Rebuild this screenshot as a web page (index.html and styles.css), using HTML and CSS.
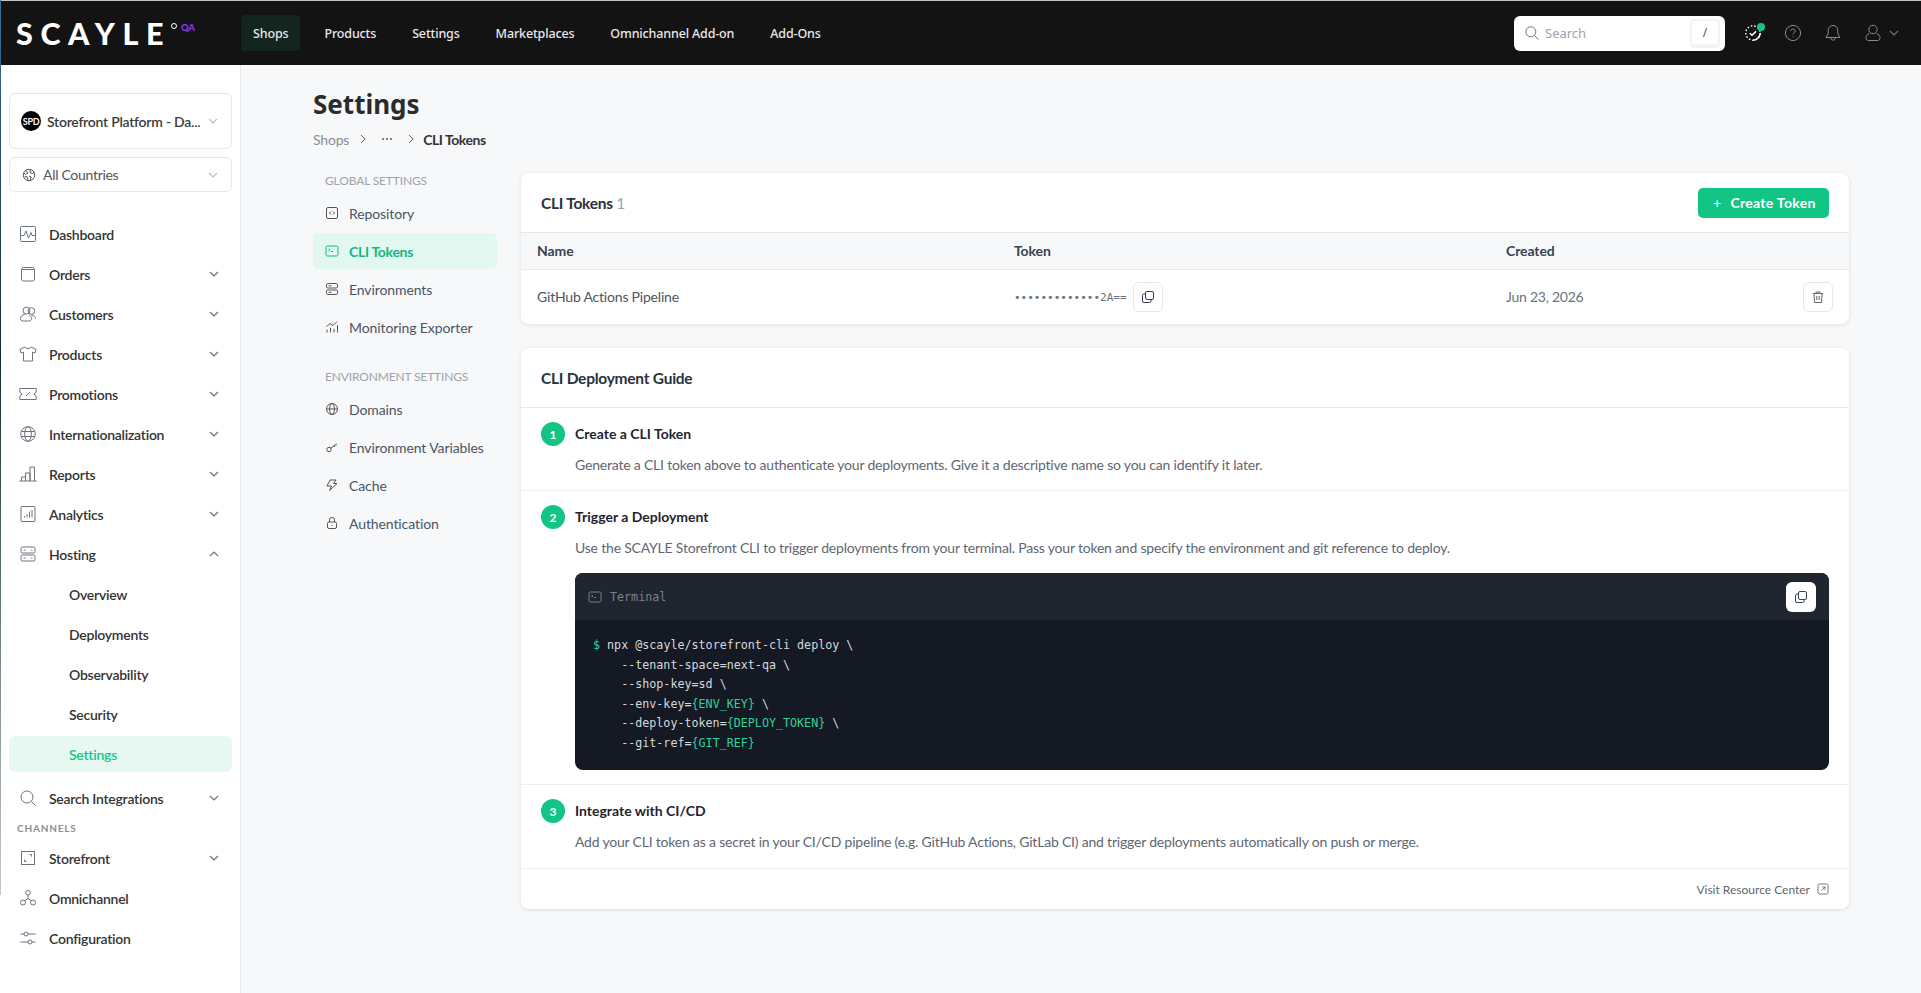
FILE: index.html
```html
<!DOCTYPE html>
<html lang="en">
<head>
    <meta charset="UTF-8">
    <title>CLI Tokens - SCAYLE</title>
    <link rel="stylesheet" href="styles.css">
</head>
<body>
    <div class="edge"></div>

    <header class="topbar">
        <div class="logo">
            <span class="logo-word">SCAYLE</span>
            <span class="logo-ring"></span>
            <span class="logo-env">QA</span>
        </div>
        <nav class="topnav">
            <a class="topnav-item active">Shops</a>
            <a class="topnav-item">Products</a>
            <a class="topnav-item">Settings</a>
            <a class="topnav-item">Marketplaces</a>
            <a class="topnav-item">Omnichannel Add-on</a>
            <a class="topnav-item">Add-Ons</a>
        </nav>
        <div class="topbar-right">
            <div class="search">
                <svg class="ico-16" viewBox="0 0 16 16"><circle cx="6.8" cy="6.8" r="5"/><path d="M10.5 10.5L14.5 14.5"/></svg>
                <span class="search-text">Search</span>
                <span class="kbd">/</span>
            </div>
            <div class="top-icon status">
                <svg class="ico-18" viewBox="0 0 18 18"><circle class="dashed" cx="9" cy="9" r="7.2"/><path class="solid" d="M9 16.2A7.2 7.2 0 0 0 16.2 9"/><path class="solid" d="M5.8 9.2L8 11.2 12 7.4"/></svg>
                <span class="status-dot"></span>
            </div>
            <div class="top-icon">
                <svg class="ico-18" viewBox="0 0 18 18"><circle cx="9" cy="9" r="7.6"/><path d="M6.8 7.1C6.8 5.8 7.8 5 9 5s2.2.8 2.2 2c0 1.700-2.200 1.700-2.200 3.500"/><path d="M9 12.400v.9"/></svg>
            </div>
            <div class="top-icon">
                <svg class="ico-18" viewBox="0 0 18 18"><path d="M9 1.500c-3 0-4.800 2.200-4.800 5v3.200L2 13.500h14l-2.200-3.800V6.500c0-2.800-1.800-5-4.800-5z"/><path d="M6.800 14a2.200 2.200 0 0 0 4.400 0"/></svg>
            </div>
            <div class="top-icon user">
                <svg class="ico-18" viewBox="0 0 18 18"><circle cx="9" cy="5.500" r="4.200"/><path d="M5.500 9.500C3 10.500 2 11.800 2 13.800 2 15.500 3 16.500 4.500 16.500h9c1.500 0 2.500-1 2.500-2.700 0-2-1-3.300-3.500-4.300"/></svg>
                <svg class="chev" viewBox="0 0 10 6"><path d="M1 1l4 4 4-4"/></svg>
            </div>
        </div>
    </header>

    <div class="layout">
        <aside class="sidebar">
            <div class="select shop-select">
                <span class="shop-badge">SPD</span>
                <span class="select-label">Storefront Platform - Da...</span>
                <svg class="chev light" viewBox="0 0 10 6"><path d="M1 1l4 4 4-4"/></svg>
            </div>
            <div class="select country-select">
                <svg class="ico-14" viewBox="0 0 14 14"><circle cx="7" cy="7" r="5.700"/><path d="M4 2.500l2 2.500-2.500 1.500L2 5M8.500 1.800L8 4.500l2.500 1 2-1.500M7 8l2 1-.5 3M2.500 9L5 8.500 6 12"/></svg>
                <span class="select-label regular">All Countries</span>
                <svg class="chev light" viewBox="0 0 10 6"><path d="M1 1l4 4 4-4"/></svg>
            </div>

            <ul class="menu">
                <li class="menu-row">
                    <svg class="ico-18" viewBox="0 0 18 18"><rect x="1.500" y="1.500" width="15" height="15" rx=".8"/><path d="M1.500 10.500H5L7 6l2.500 7L12 7.500l1 3h3.500"/></svg>
                    <span>Dashboard</span>
                </li>
                <li class="menu-row">
                    <svg class="ico-18" viewBox="0 0 18 18"><rect x="2.500" y="2.500" width="13" height="13.500" rx="2"/><path d="M3 4.500h12"/></svg>
                    <span>Orders</span>
                    <svg class="chev" viewBox="0 0 10 6"><path d="M1 1l4 4 4-4"/></svg>
                </li>
                <li class="menu-row">
                    <svg class="ico-18" viewBox="0 0 18 18"><circle cx="7.500" cy="5.500" r="3.500"/><circle cx="12.500" cy="6" r="3.300"/><path d="M6 9c-3 .8-4.500 2.500-4.500 4.500 0 1.500 1 2.500 2.500 2.500h6c1.500 0 2.500-1 2.500-2.500 0-1.500-.8-2.800-2.500-3.800M12.500 10c2.500.5 4 1.800 4 3.500"/></svg>
                    <span>Customers</span>
                    <svg class="chev" viewBox="0 0 10 6"><path d="M1 1l4 4 4-4"/></svg>
                </li>
                <li class="menu-row">
                    <svg class="ico-18" viewBox="0 0 18 18"><path d="M6 2L.8 4.500 2 8l2.500-.8V16h9V7.200L16 8l1.200-3.500L12 2c-.5 2-5.500 2-6 0z"/></svg>
                    <span>Products</span>
                    <svg class="chev" viewBox="0 0 10 6"><path d="M1 1l4 4 4-4"/></svg>
                </li>
                <li class="menu-row">
                    <svg class="ico-18" viewBox="0 0 18 18"><path d="M.8 3.500h16.400v3.700L14.800 9l2.400 1.800v3.700H.8v-3.700L3.200 9 .8 7.200z"/><path d="M7 11l4-4M7 7h.5M10.500 11h.5"/></svg>
                    <span>Promotions</span>
                    <svg class="chev" viewBox="0 0 10 6"><path d="M1 1l4 4 4-4"/></svg>
                </li>
                <li class="menu-row">
                    <svg class="ico-18" viewBox="0 0 18 18"><circle cx="9" cy="9" r="7.300"/><ellipse cx="9" cy="9" rx="3.300" ry="7.300"/><path d="M2 6.500h14M2 11.500h14"/></svg>
                    <span>Internationalization</span>
                    <svg class="chev" viewBox="0 0 10 6"><path d="M1 1l4 4 4-4"/></svg>
                </li>
                <li class="menu-row">
                    <svg class="ico-18" viewBox="0 0 18 18"><path d="M.5 16h17M2.500 16v-4h4v4M6.500 16V8h4.500v8M11 16V2h4.500v14"/></svg>
                    <span>Reports</span>
                    <svg class="chev" viewBox="0 0 10 6"><path d="M1 1l4 4 4-4"/></svg>
                </li>
                <li class="menu-row">
                    <svg class="ico-18" viewBox="0 0 18 18"><rect x="2" y="1.500" width="14" height="15" rx=".8"/><path d="M5.500 12.500v-1.500M8 12.500V9M10.500 12.500V6.500M13 12.500V5"/></svg>
                    <span>Analytics</span>
                    <svg class="chev" viewBox="0 0 10 6"><path d="M1 1l4 4 4-4"/></svg>
                </li>
                <li class="menu-row">
                    <svg class="ico-18" viewBox="0 0 18 18"><rect x="2" y="2" width="14" height="6" rx="1.500"/><rect x="2" y="10" width="14" height="6" rx="1.500"/><path d="M4.500 5h2M12 5h1.500M4.500 13h2M12 13h1.500"/></svg>
                    <span>Hosting</span>
                    <svg class="chev up" viewBox="0 0 10 6"><path d="M1 1l4 4 4-4"/></svg>
                </li>
                <li class="menu-row sub">Overview</li>
                <li class="menu-row sub">Deployments</li>
                <li class="menu-row sub">Observability</li>
                <li class="menu-row sub">Security</li>
                <li class="menu-row sub current"><span>Settings</span></li>
                <li class="menu-row after-sub">
                    <svg class="ico-18" viewBox="0 0 18 18"><circle cx="8" cy="8" r="6"/><path d="M12.500 12.500l4 4"/></svg>
                    <span>Search Integrations</span>
                    <svg class="chev" viewBox="0 0 10 6"><path d="M1 1l4 4 4-4"/></svg>
                </li>
                <li class="menu-heading">CHANNELS</li>
                <li class="menu-row">
                    <svg class="ico-18" viewBox="0 0 18 18"><rect x="2.500" y="2.500" width="13" height="13"/><path d="M10.500 5.500h2v2M5.500 10.500v2h2"/></svg>
                    <span>Storefront</span>
                    <svg class="chev" viewBox="0 0 10 6"><path d="M1 1l4 4 4-4"/></svg>
                </li>
                <li class="menu-row">
                    <svg class="ico-18" viewBox="0 0 18 18"><circle cx="9" cy="3.800" r="2.300"/><circle cx="4" cy="13.500" r="2.500"/><circle cx="14" cy="13.500" r="2.500"/><path d="M9 6.100v3.400M9 9.500l-3.300 2.200M9 9.500l3.300 2.200"/></svg>
                    <span>Omnichannel</span>
                </li>
                <li class="menu-row">
                    <svg class="ico-18" viewBox="0 0 18 18"><circle cx="7" cy="5" r="2"/><circle cx="11" cy="13" r="2"/><path d="M1.500 5H5M9 5h7.500M1.500 13H9M13 13h3.500"/></svg>
                    <span>Configuration</span>
                </li>
            </ul>
        </aside>

        <main class="main">
            <h1 class="page-title">Settings</h1>
            <div class="crumbs">
                <span class="crumb">Shops</span>
                <svg class="crumb-sep" viewBox="0 0 6 10"><path d="M1 1l4 4-4 4"/></svg>
                <svg class="crumb-dots" viewBox="0 0 12 4"><circle cx="2" cy="2" r="1.100"/><circle cx="6" cy="2" r="1.100"/><circle cx="10" cy="2" r="1.100"/></svg>
                <svg class="crumb-sep" viewBox="0 0 6 10"><path d="M1 1l4 4-4 4"/></svg>
                <span class="crumb last">CLI Tokens</span>
            </div>

            <div class="content">
                <nav class="subnav">
                    <div class="subnav-heading">GLOBAL SETTINGS</div>
                    <a class="subnav-item">
                        <svg class="ico-14" viewBox="0 0 14 14"><rect x="1.500" y="1.500" width="11" height="11" rx="1.500"/><path d="M5.800 5.500L4.500 7l1.300 1.500M8.200 5.500L9.500 7 8.200 8.500"/></svg>
                        Repository
                    </a>
                    <a class="subnav-item active">
                        <svg class="ico-14" viewBox="0 0 14 14"><rect x="1" y="2" width="12" height="10" rx="1.500"/><path d="M3.500 5L5 6 3.500 7M6 7.500h2"/></svg>
                        CLI Tokens
                    </a>
                    <a class="subnav-item">
                        <svg class="ico-14" viewBox="0 0 14 14"><rect x="1.500" y="1.500" width="11" height="4.500" rx="1.200"/><rect x="1.500" y="8" width="11" height="4.500" rx="1.200"/><path d="M3.500 3.800h3M3.500 10.300h3"/></svg>
                        Environments
                    </a>
                    <a class="subnav-item">
                        <svg class="ico-14" viewBox="0 0 14 14"><path d="M2 12.500v-3M5.500 12.500V8M9 12.500V9M12.500 12.500V5M1.500 6.500L5 3.500l3 2 4-4"/></svg>
                        Monitoring Exporter
                    </a>
                    <div class="subnav-heading second">ENVIRONMENT SETTINGS</div>
                    <a class="subnav-item">
                        <svg class="ico-14" viewBox="0 0 14 14"><circle cx="7" cy="7" r="5.500"/><ellipse cx="7" cy="7" rx="2.400" ry="5.500"/><path d="M1.500 7h11"/></svg>
                        Domains
                    </a>
                    <a class="subnav-item">
                        <svg class="ico-14" viewBox="0 0 14 14"><circle cx="4" cy="9.500" r="2.200"/><path d="M5.800 8.200l5.700-4.200M9 5.800l1 1.200M11 4.300l.8 1"/></svg>
                        Environment Variables
                    </a>
                    <a class="subnav-item">
                        <svg class="ico-14" viewBox="0 0 14 14"><path d="M5 2h6L8.500 5.500H12L4.500 12.500 6.500 8H2z"/></svg>
                        Cache
                    </a>
                    <a class="subnav-item">
                        <svg class="ico-14" viewBox="0 0 14 14"><rect x="2.500" y="6" width="9" height="6.500" rx="1.500"/><path d="M4.500 6V4a2.500 2.500 0 0 1 5 0v2M7 9v1"/></svg>
                        Authentication
                    </a>
                </nav>

                <div class="cards">
                    <section class="card">
                        <div class="card-head tokens-head">
                            <h2 class="card-title">CLI Tokens <span class="count">1</span></h2>
                            <button class="btn-primary"><span class="plus">+</span>Create Token</button>
                        </div>
                        <div class="token-row table-head">
                            <div>Name</div>
                            <div>Token</div>
                            <div>Created</div>
                        </div>
                        <div class="token-row table-body">
                            <div class="token-name">GitHub Actions Pipeline</div>
                            <div class="token-value">
                                <code>&#8226;&#8226;&#8226;&#8226;&#8226;&#8226;&#8226;&#8226;&#8226;&#8226;&#8226;&#8226;&#8226;2A==</code>
                                <button class="icon-btn">
                                    <svg class="ico-14" viewBox="0 0 14 14"><rect x="4.500" y="1.500" width="8" height="8" rx="1.500"/><path d="M4.500 4H3a1.500 1.500 0 0 0-1.500 1.500V11A1.500 1.500 0 0 0 3 12.500h5.500A1.500 1.500 0 0 0 10 11V9.500"/></svg>
                                </button>
                            </div>
                            <div class="token-date">
                                <span class="date-text">Jun 23, 2026</span>
                                <button class="icon-btn trash">
                                    <svg class="ico-14" viewBox="0 0 14 14"><path d="M2 3.500h10M5 3.500V2h4v1.500M3 3.500l.5 9h7l.5-9M5.800 6v4M8.200 6v4"/></svg>
                                </button>
                            </div>
                        </div>
                    </section>

                    <section class="card">
                        <div class="card-head">
                            <h2 class="card-title">CLI Deployment Guide</h2>
                        </div>
                        <div class="step">
                            <span class="step-num">1</span>
                            <div class="step-body">
                                <h3 class="step-title">Create a CLI Token</h3>
                                <p class="step-text">Generate a CLI token above to authenticate your deployments. Give it a descriptive name so you can identify it later.</p>
                            </div>
                        </div>
                        <div class="step step-code">
                            <span class="step-num">2</span>
                            <div class="step-body">
                                <h3 class="step-title">Trigger a Deployment</h3>
                                <p class="step-text">Use the SCAYLE Storefront CLI to trigger deployments from your terminal. Pass your token and specify the environment and git reference to deploy.</p>
                                <div class="terminal">
                                    <div class="terminal-head">
                                        <svg class="ico-14" viewBox="0 0 14 14"><rect x="1" y="2" width="12" height="10" rx="1.500"/><path d="M3.500 5L5 6 3.500 7M6 7.500h2"/></svg>
                                        <span>Terminal</span>
                                        <button class="icon-btn white">
                                            <svg class="ico-14" viewBox="0 0 14 14"><rect x="4.500" y="1.500" width="8" height="8" rx="1.500"/><path d="M4.500 4H3a1.500 1.500 0 0 0-1.500 1.500V11A1.500 1.500 0 0 0 3 12.500h5.500A1.500 1.500 0 0 0 10 11V9.500"/></svg>
                                        </button>
                                    </div>
<pre class="terminal-code"><span class="g">$</span> npx @scayle/storefront-cli deploy \
    --tenant-space=next-qa \
    --shop-key=sd \
    --env-key=<span class="g">{ENV_KEY}</span> \
    --deploy-token=<span class="g">{DEPLOY_TOKEN}</span> \
    --git-ref=<span class="g">{GIT_REF}</span></pre>
                                </div>
                            </div>
                        </div>
                        <div class="step step-last">
                            <span class="step-num">3</span>
                            <div class="step-body">
                                <h3 class="step-title">Integrate with CI/CD</h3>
                                <p class="step-text">Add your CLI token as a secret in your CI/CD pipeline (e.g. GitHub Actions, GitLab CI) and trigger deployments automatically on push or merge.</p>
                            </div>
                        </div>
                        <div class="card-foot">
                            <a class="foot-link">Visit Resource Center</a>
                            <svg class="ico-12" viewBox="0 0 12 12"><rect x="1" y="1" width="10" height="10" rx="1.500"/><path d="M4.500 7.500L8 4M5.200 4H8v2.800"/></svg>
                        </div>
                    </section>
                </div>
            </div>
        </main>
    </div>
</body>
</html>
```

FILE: styles.css
```css
* {
    box-sizing: border-box;
}
html, body {
    margin: 0;
    height: 100%;
    overflow: hidden;
}
body {
    font-family: "Lato", Arial, sans-serif;
    font-size: 14px;
    letter-spacing: -.2px;
    color: #333;
    background-color: #f7f8fa;
    display: flex;
    flex-direction: column;
}
svg {
    fill: none;
    stroke: currentColor;
    stroke-width: 1;
    flex-shrink: 0;
}
.ico-12 { width: 12px; height: 12px; }
.ico-14 { width: 14px; height: 14px; }
.ico-16 { width: 16px; height: 16px; }
.ico-18 { width: 18px; height: 18px; }
.chev {
    width: 10px;
    height: 6px;
    color: #6b7280;
    stroke-width: 1.2;
}
.chev.light { color: #b9bdc4; }
.chev.up { transform: rotate(180deg); }

/* sliver of the desktop behind the window */
.edge {
    position: absolute;
    left: 0;
    top: 0;
    width: 1px;
    height: 895px;
    z-index: 5;
    background: linear-gradient(#3d6f9a, #0f2a33 40%, #7d8f7c 75%, #c4ccc0);
}

/* top bar */
.topbar {
    height: 65px;
    flex-shrink: 0;
    background-color: #131313;
    border-top: 1px solid #c4c4c4;
    display: flex;
    align-items: center;
    font-family: "Noto Sans", Arial, sans-serif;
}
.logo {
    width: 241px;
    padding-left: 16px;
    display: flex;
    align-items: flex-start;
    height: 30px;
}
.logo-word {
    font-family: "Lato", Arial, sans-serif;
    font-weight: 900;
    font-size: 30.5px;
    line-height: 30px;
    letter-spacing: 7.6px;
    color: #fff;
}
.logo-ring {
    width: 6px;
    height: 6px;
    border: 1.500px solid #fff;
    border-radius: 50%;
    margin: 5px 0 0 0;
}
.logo-env {
    font-family: "Lato", Arial, sans-serif;
    font-size: 9.500px;
    font-weight: 900;
    letter-spacing: -.2px;
    color: #9333ea;
    margin: 4px 0 0 4px;
}
.topnav {
    display: flex;
    gap: 12px;
}
.topnav-item {
    height: 36px;
    padding: 0 12px;
    display: flex;
    align-items: center;
    border-radius: 4px;
    font-size: 12.500px;
    letter-spacing: -.15px;
    font-weight: 500;
    color: #e8e8e8;
}
.topnav-item.active {
    background-color: #14241f;
}
.topbar-right {
    margin-left: auto;
    display: flex;
    align-items: center;
}
.search {
    width: 211px;
    height: 35px;
    background-color: #fff;
    border-radius: 6px;
    display: flex;
    align-items: center;
    padding: 0 5px 0 10px;
    color: #6b7280;
    margin-right: 19px;
}
.search-text {
    margin-left: 5px;
    font-size: 13px;
    letter-spacing: 0;
    color: #9ca3af;
}
.kbd {
    margin-left: auto;
    width: 30px;
    height: 29px;
    background-color: #fff;
    border: 2px solid #f1f3f6;
    border-bottom-width: 4px;
    border-radius: 4px;
    display: flex;
    align-items: center;
    justify-content: center;
    font-size: 12px;
    color: #555;
}
.top-icon {
    color: #8a8a8a;
    display: flex;
    align-items: center;
    margin-right: 22px;
    height: 24px;
}
.top-icon.status {
    color: #fff;
    position: relative;
}
.top-icon .dashed {
    stroke-width: 1.500;
    stroke-dasharray: 1.500 2;
}
.top-icon .solid {
    stroke-width: 1.500;
}
.status-dot {
    position: absolute;
    top: 2px;
    right: -3px;
    width: 8px;
    height: 8px;
    border-radius: 50%;
    background-color: #12c584;
}
.top-icon.user {
    margin-right: 22px;
    gap: 7px;
}

/* page frame */
.layout {
    flex: 1;
    display: flex;
    min-height: 0;
}
.sidebar {
    width: 241px;
    flex-shrink: 0;
    background-color: #fff;
    border-right: 1px solid #e5e7eb;
    padding: 28px 8px 0 9px;
}
.select {
    border: 1px solid #e5e7eb;
    border-radius: 6px;
    display: flex;
    align-items: center;
    padding: 0 11px;
    width: 223px;
}
.shop-select {
    height: 56px;
    margin-bottom: 8px;
}
.country-select {
    height: 35px;
    color: #555;
}
.country-select .ico-14 {
    margin-left: 1px;
}
.shop-badge {
    width: 20px;
    height: 20px;
    border-radius: 50%;
    background-color: #000;
    color: #fff;
    font-size: 9px;
    font-weight: 700;
    letter-spacing: -.3px;
    display: flex;
    align-items: center;
    justify-content: center;
    flex-shrink: 0;
}
.select-label {
    margin-left: 6px;
    font-weight: 600;
    letter-spacing: -.25px;
    white-space: nowrap;
    color: #3b3b3b;
}
.select-label.regular {
    margin-left: 7px;
    font-weight: 400;
    letter-spacing: -.3px;
    color: #555;
}
.select .chev {
    margin-left: auto;
    margin-right: 2px;
}
.menu {
    list-style: none;
    margin: 22px 0 0;
    padding: 0;
}
.menu-row {
    height: 40px;
    display: flex;
    align-items: center;
    padding: 0 13px 0 10px;
    font-weight: 600;
    letter-spacing: -.25px;
    color: #333;
}
.menu-row .ico-18 {
    color: #6b7280;
    margin-right: 12px;
}
.menu-row .chev {
    margin-left: auto;
}
.menu-row.sub {
    padding-left: 60px;
}
.menu-row.current {
    height: 36px;
    margin: 2px 0;
    color: #14c784;
    background-color: #e7f7f1;
    border-radius: 6px;
}
.menu-row.after-sub {
    margin-top: 6px;
}
.menu-heading {
    height: 20px;
    padding-left: 8px;
    display: flex;
    align-items: center;
    font-size: 10px;
    font-weight: 700;
    letter-spacing: .8px;
    color: #8c8f94;
}

/* main column */
.main {
    flex: 1;
    min-width: 0;
    padding: 0 72px 0 72px;
}
.page-title {
    font-family: "Noto Sans", Arial, sans-serif;
    font-size: 26px;
    font-weight: 700;
    letter-spacing: 0;
    line-height: 36px;
    margin: 21px 0 0;
    color: #2b2b2b;
}
.crumbs {
    display: flex;
    align-items: center;
    height: 20px;
    margin-top: 7px;
    color: #8a8f98;
}
.crumb.last {
    font-weight: 700;
    letter-spacing: -.45px;
    margin-left: -2px;
    color: #333;
}
.crumb-sep {
    width: 6px;
    height: 10px;
    margin: 0 11px;
    color: #666;
}
.crumb-dots {
    width: 12px;
    height: 4px;
    fill: #666;
    stroke: none;
    margin: 0 4px;
}
.content {
    display: grid;
    grid-template-columns: 184px 1fr;
    gap: 24px;
    margin-top: 24px;
}

/* settings nav */
.subnav-heading {
    height: 22px;
    padding-left: 12px;
    margin-top: -4px;
    margin-bottom: 4px;
    display: flex;
    align-items: center;
    font-size: 12px;
    letter-spacing: -.15px;
    color: #9ca3af;
}
.subnav-heading.second {
    margin-top: 20px;
}
.subnav-item {
    height: 36px;
    margin-bottom: 2px;
    padding-left: 12px;
    display: flex;
    align-items: center;
    gap: 10px;
    border-radius: 6px;
    letter-spacing: -.1px;
    color: #4b5563;
}
.subnav-item svg {
    color: #555;
}
.subnav-item.active {
    background-color: #e3f7f1;
    color: #10b97b;
    font-weight: 700;
    letter-spacing: -.3px;
}
.subnav-item.active svg {
    color: #10b97b;
}

/* cards */
.cards {
    display: flex;
    flex-direction: column;
    gap: 24px;
}
.card {
    background-color: #fff;
    border-radius: 8px;
    box-shadow: 0 1px 4px rgba(0,0,0,0.1);
}
.card-head {
    height: 60px;
    padding: 0 20px;
    display: flex;
    align-items: center;
    justify-content: space-between;
    border-bottom: 1px solid #e5e7eb;
}
.card-title {
    margin: 0;
    font-size: 15.500px;
    font-weight: 700;
    letter-spacing: -.25px;
    color: #2a3240;
}
.count {
    font-weight: 400;
    color: #9ca3af;
}
.btn-primary {
    width: 131px;
    height: 30px;
    padding: 0 0 0 15px;
    border: none;
    border-radius: 5px;
    background-color: #12c584;
    color: #fff;
    font-family: inherit;
    font-size: 14px;
    font-weight: 700;
    letter-spacing: .3px;
    display: flex;
    align-items: center;
}
.plus {
    font-weight: 400;
    margin-right: 9px;
}
.token-row {
    display: grid;
    grid-template-columns: 477px 492px 1fr;
    padding: 0 16px;
    align-items: center;
}
.table-head {
    height: 37px;
    padding-bottom: 1px;
    background-color: #f7f8fa;
    border-bottom: 1px solid #e8eaee;
    font-weight: 700;
    letter-spacing: -.1px;
    color: #3a4150;
}
.table-body {
    height: 54px;
    color: #4b5563;
}
.token-name, .date-text {
    margin-bottom: 2px;
}
.token-value {
    display: flex;
    align-items: center;
    gap: 6px;
}
.token-value code {
    font-family: "DejaVu Sans Mono", monospace;
    font-size: 11px;
    letter-spacing: 0;
    color: #6b7280;
}
.token-date {
    display: flex;
    align-items: center;
    justify-content: space-between;
    letter-spacing: -.25px;
    color: #6b7280;
}
.icon-btn {
    width: 30px;
    height: 30px;
    padding: 0;
    border: 1px solid #e5e7eb;
    border-radius: 6px;
    background-color: #fff;
    color: #374151;
    display: flex;
    align-items: center;
    justify-content: center;
}
.icon-btn.trash svg {
    color: #666;
}
.step {
    display: flex;
    gap: 10px;
    padding: 14px 20px 15px;
    border-bottom: 1px solid #eceef1;
}
.step-code {
    padding-bottom: 14px;
}
.step-last {
    padding-bottom: 16px;
}
.step-num {
    width: 24px;
    height: 24px;
    flex-shrink: 0;
    border-radius: 50%;
    background-color: #12c584;
    color: #fff;
    font-size: 12px;
    font-weight: 700;
    display: flex;
    align-items: center;
    justify-content: center;
}
.step-body {
    flex: 1;
    min-width: 0;
}
.step-title {
    margin: 0 0 9px;
    font-size: 14px;
    line-height: 24px;
    font-weight: 700;
    letter-spacing: 0;
    color: #1f2430;
}
.step-text {
    margin: 0;
    line-height: 20px;
    color: #5f6672;
}

/* terminal block */
.terminal {
    margin-top: 15px;
    border-radius: 8px;
    background-color: #141923;
    overflow: hidden;
    font-family: "DejaVu Sans Mono", monospace;
    font-size: 11.700px;
    letter-spacing: 0;
}
.terminal-head {
    height: 47px;
    background-color: #1f2630;
    padding: 0 13px;
    display: flex;
    align-items: center;
    gap: 8px;
    color: #7a818c;
}
.terminal-head .icon-btn {
    margin-left: auto;
    border: none;
}
.terminal-code {
    margin: 0;
    padding: 16px 18px 17px;
    font-family: inherit;
    font-size: inherit;
    line-height: 19.500px;
    color: #d5d9df;
}
.terminal-code .g {
    color: #2fd39a;
}
.card-foot {
    height: 40px;
    padding: 0 20px 0 0;
    display: flex;
    align-items: center;
    justify-content: flex-end;
    gap: 7px;
    font-size: 12px;
    letter-spacing: 0;
    color: #5f6672;
}
.card-foot svg {
    color: #777;
}
```
